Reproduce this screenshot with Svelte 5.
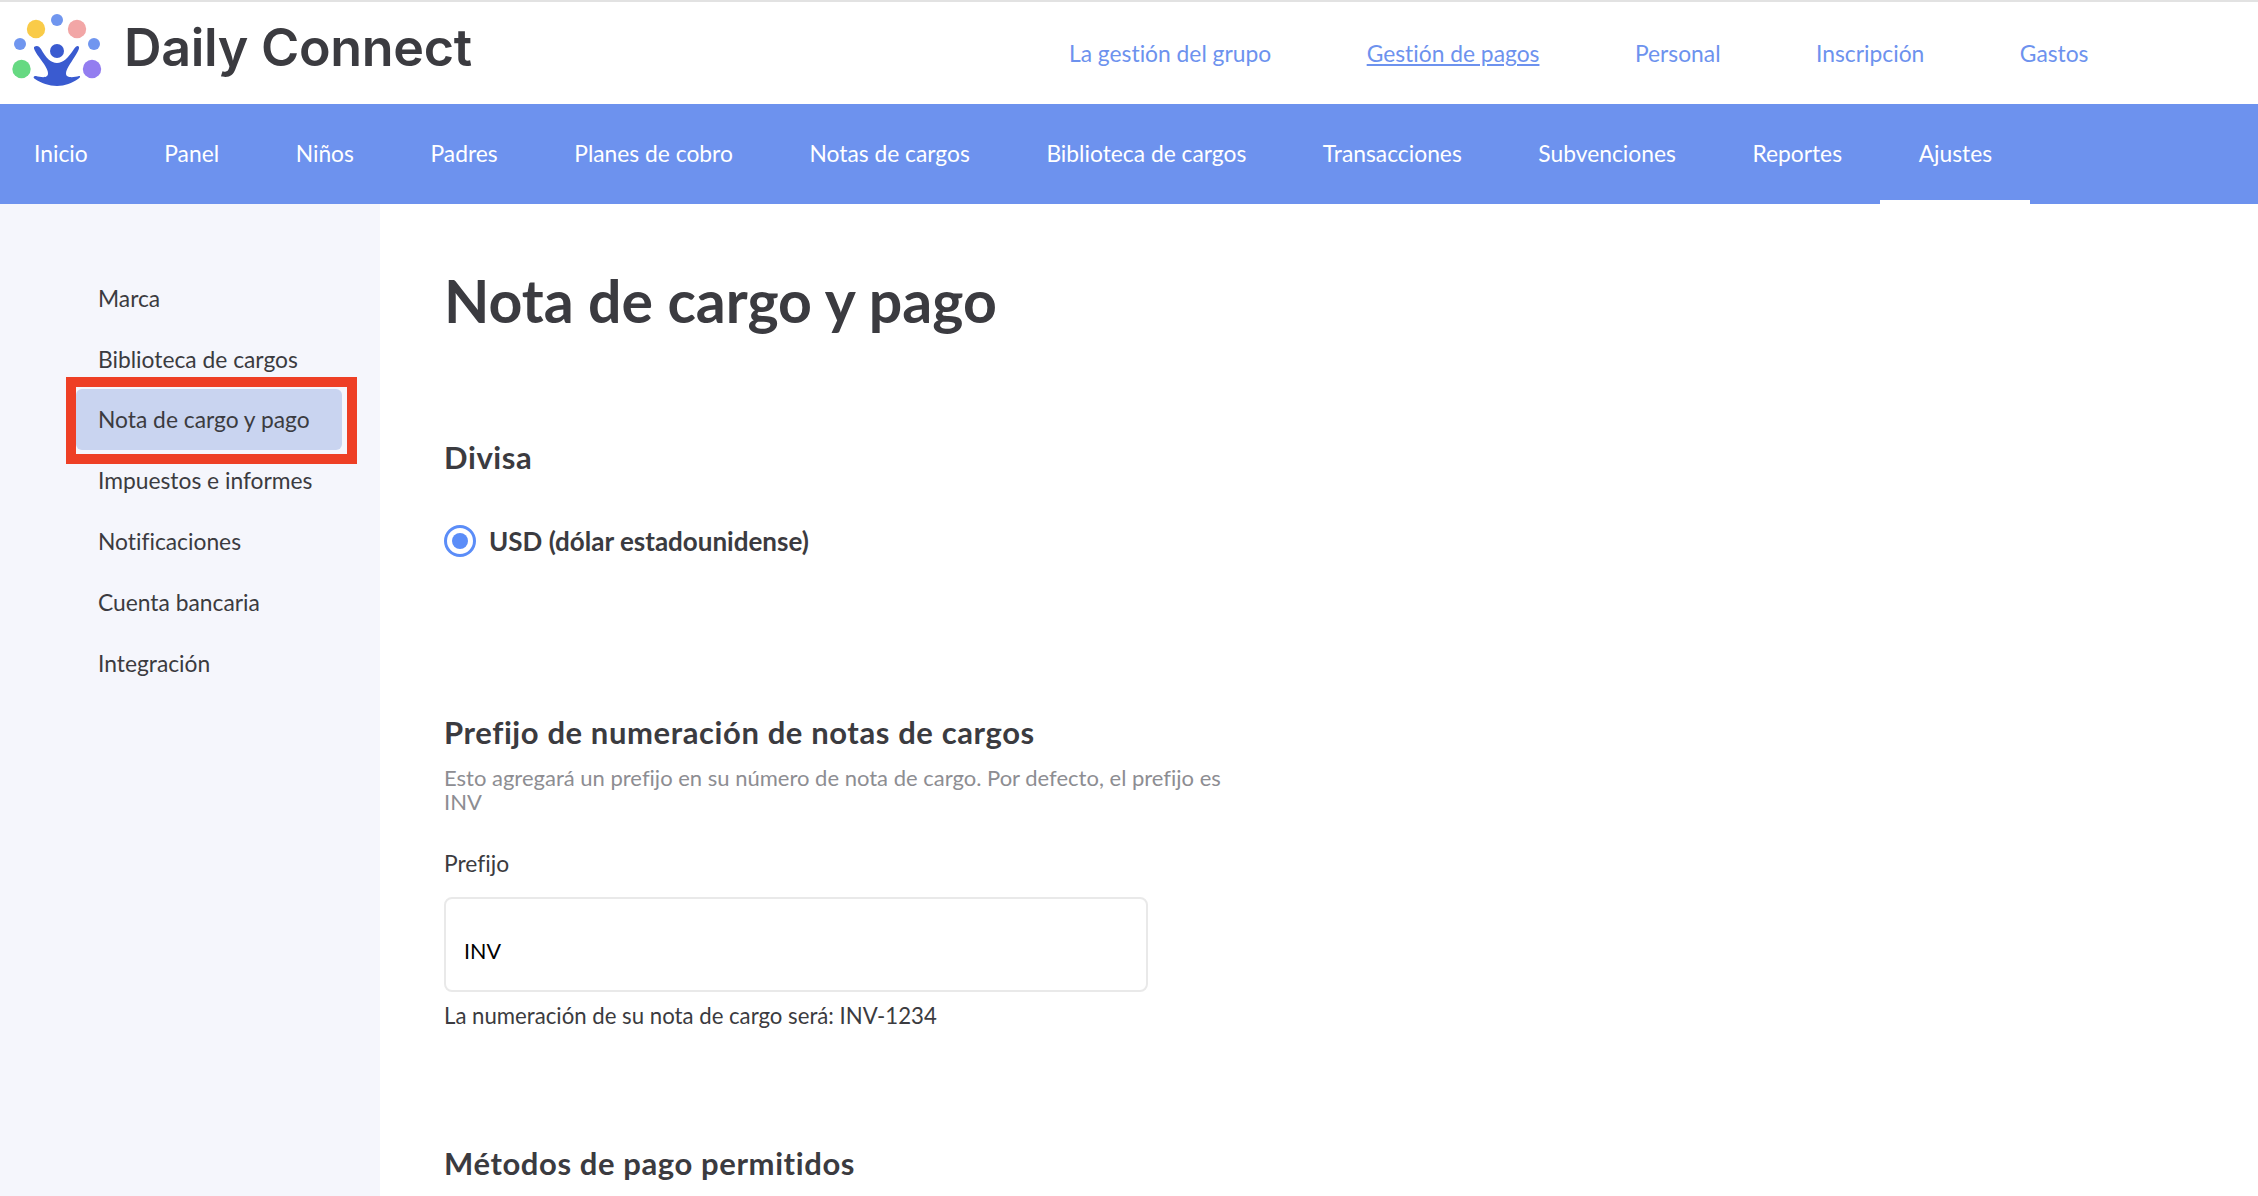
<script>
  const topLinks = [
    { label: 'La gestión del grupo' },
    { label: 'Gestión de pagos', active: true },
    { label: 'Personal' },
    { label: 'Inscripción' },
    { label: 'Gastos' }
  ];
  const navItems = ['Inicio', 'Panel', 'Niños', 'Padres', 'Planes de cobro', 'Notas de cargos', 'Biblioteca de cargos', 'Transacciones', 'Subvenciones', 'Reportes', 'Ajustes'];
  const sideItems = ['Marca', 'Biblioteca de cargos', 'Nota de cargo y pago', 'Impuestos e informes', 'Notificaciones', 'Cuenta bancaria', 'Integración'];
</script>

<div class="page">
  <header class="top">
    <div class="brand">
      <svg class="logo" viewBox="0 0 114 88" width="114" height="88" aria-hidden="true">
        <circle cx="36" cy="29" r="9.2" fill="#f9cb48" />
        <circle cx="57" cy="20" r="6" fill="#7096ef" />
        <circle cx="77" cy="29" r="9.2" fill="#f2a6a6" />
        <circle cx="20" cy="44" r="6" fill="#7096ef" />
        <circle cx="94" cy="44" r="6" fill="#7096ef" />
        <circle cx="21.5" cy="69" r="9.2" fill="#66d982" />
        <circle cx="92" cy="69" r="9.2" fill="#937df0" />
        <circle cx="57" cy="51" r="7" fill="#3a5bd0" />
        <path d="M34 47 C37 45 39 46 41 49 C46 58 51 63 57 63 C63 63 68 58 74 49 C76 46 78 45 79 47 C80 49 74 58 70 64 C66 70 65 74 67 76 C70 78 75 77 79 76 C81 76 80 78 78 79 C72 83 65 86 57 86 C49 86 41 83 35 79 C33 78 33 76 36 76 C40 77 45 78 47 76 C49 74 48 70 44 64 C40 58 33 50 34 47 Z" fill="#3a5bd0" />
      </svg>
      <span class="wordmark">Daily Connect</span>
    </div>
    <nav class="top-links">
      {#each topLinks as link}
        <a href="#top" class:active={link.active}>{link.label}</a>
      {/each}
    </nav>
  </header>

  <nav class="mainnav">
    {#each navItems as item}
      <a href="#nav" class:current={item === 'Ajustes'}>{item}</a>
    {/each}
  </nav>

  <div class="body">
    <aside class="side">
      {#each sideItems as item}
        <a href="#side" class:selected={item === 'Nota de cargo y pago'}>{item}</a>
      {/each}
      <div class="highlight"></div>
    </aside>

    <main class="content">
      <h1>Nota de cargo y pago</h1>

      <section class="divisa">
        <h2>Divisa</h2>
        <div class="radio-row">
          <span class="radio"><span class="dot"></span></span>
          <span class="radio-label">USD (dólar estadounidense)</span>
        </div>
      </section>

      <section class="prefijo">
        <h2>Prefijo de numeración de notas de cargos</h2>
        <p class="hint">Esto agregará un prefijo en su número de nota de cargo. Por defecto, el prefijo es INV</p>
        <div class="field-label">Prefijo</div>
        <div class="input">INV</div>
        <div class="note">La numeración de su nota de cargo será: INV-1234</div>
      </section>

      <section class="metodos">
        <h2>Métodos de pago permitidos</h2>
      </section>
    </main>
  </div>
</div>

<style>
  :global(body) {
    margin: 0;
    background: #fff;
  }

  .page {
    height: 1196px;
    overflow: hidden;
    display: flex;
    flex-direction: column;
    font-family: Lato, "Liberation Sans", sans-serif;
    font-variant-ligatures: none;
    color: #3b3b40;
    border-top: 2px solid #e2e2e2;
    box-sizing: border-box;
  }

  .top {
    height: 102px;
    display: flex;
    align-items: center;
    flex-shrink: 0;
  }

  .brand {
    display: flex;
    align-items: flex-start;
    width: 1040px;
    height: 102px;
  }

  .logo {
    margin-top: -2px;
    flex-shrink: 0;
  }

  .wordmark {
    margin-left: 10px;
    margin-top: 14px;
    font-family: Inter, sans-serif;
    font-size: 52px;
    font-weight: 600;
    letter-spacing: -0.3px;
    color: #3b3b40;
  }

  .top-links {
    display: flex;
    gap: 95.5px;
    margin-left: 29px;
    margin-top: 0;
  }

  .top-links a {
    font-size: 22.8px;
    color: #6d92ee;
    text-decoration: none;
  }

  .top-links a.active {
    text-decoration: underline;
  }

  .mainnav {
    height: 100px;
    flex-shrink: 0;
    display: flex;
    background: #6d92ee;
  }

  .mainnav a {
    display: flex;
    align-items: center;
    padding: 2px 38.3px 0;
    font-size: 22.8px;
    color: #fff;
    text-decoration: none;
    border-bottom: 4px solid transparent;
    box-sizing: border-box;
  }

  .mainnav a:first-child {
    padding-left: 34px;
  }

  .mainnav a.current {
    border-bottom-color: #fff;
  }

  .body {
    flex: 1;
    display: flex;
    min-height: 0;
  }

  .side {
    position: relative;
    width: 380px;
    flex-shrink: 0;
    background: #f5f6fc;
    padding: 63.4px 0 0 76px;
    box-sizing: border-box;
    display: flex;
    flex-direction: column;
  }

  .side a {
    display: flex;
    align-items: center;
    width: 266px;
    height: 60.8px;
    padding-left: 22px;
    box-sizing: border-box;
    font-size: 22.8px;
    color: #3b3b40;
    text-decoration: none;
    border-radius: 6px;
  }

  .side a.selected {
    background: #c9d4f0;
  }

  .highlight {
    position: absolute;
    left: 66px;
    top: 173px;
    width: 291px;
    height: 87px;
    border: 10px solid #ee3f25;
    box-sizing: border-box;
    pointer-events: none;
  }

  .content {
    flex: 1;
    padding: 62px 0 0 64px;
  }

  h1 {
    margin: 0;
    font-size: 59px;
    line-height: 70px;
    font-weight: 700;
    color: #3b3b40;
  }

  h2 {
    margin: 0;
    font-size: 31px;
    line-height: 36px;
    font-weight: 700;
    letter-spacing: 0.6px;
    color: #3b3b40;
  }

  .divisa {
    margin-top: 103px;
  }

  .radio-row {
    display: flex;
    align-items: center;
    gap: 13px;
    margin-top: 50px;
  }

  .radio {
    width: 32px;
    height: 32px;
    border: 3px solid #5b8df8;
    border-radius: 50%;
    box-sizing: border-box;
    display: flex;
    align-items: center;
    justify-content: center;
  }

  .dot {
    width: 16px;
    height: 16px;
    border-radius: 50%;
    background: #5b8df8;
  }

  .radio-label {
    font-size: 26px;
    font-weight: 700;
  }

  .prefijo {
    margin-top: 157px;
  }

  .hint {
    margin: 16px 0 0;
    width: 790px;
    font-size: 22px;
    line-height: 24px;
    color: #8d8d92;
  }

  .field-label {
    margin-top: 35px;
    font-size: 22.8px;
    line-height: 28px;
  }

  .input {
    margin-top: 20px;
    width: 704px;
    height: 95px;
    border: 2px solid #e9e9e9;
    border-radius: 8px;
    box-sizing: border-box;
    padding: 39px 0 0 18px;
    font-size: 21.5px;
    color: #000;
  }

  .note {
    margin-top: 10px;
    font-size: 22.2px;
    line-height: 28px;
  }

  .metodos {
    margin-top: 115px;
  }
</style>
